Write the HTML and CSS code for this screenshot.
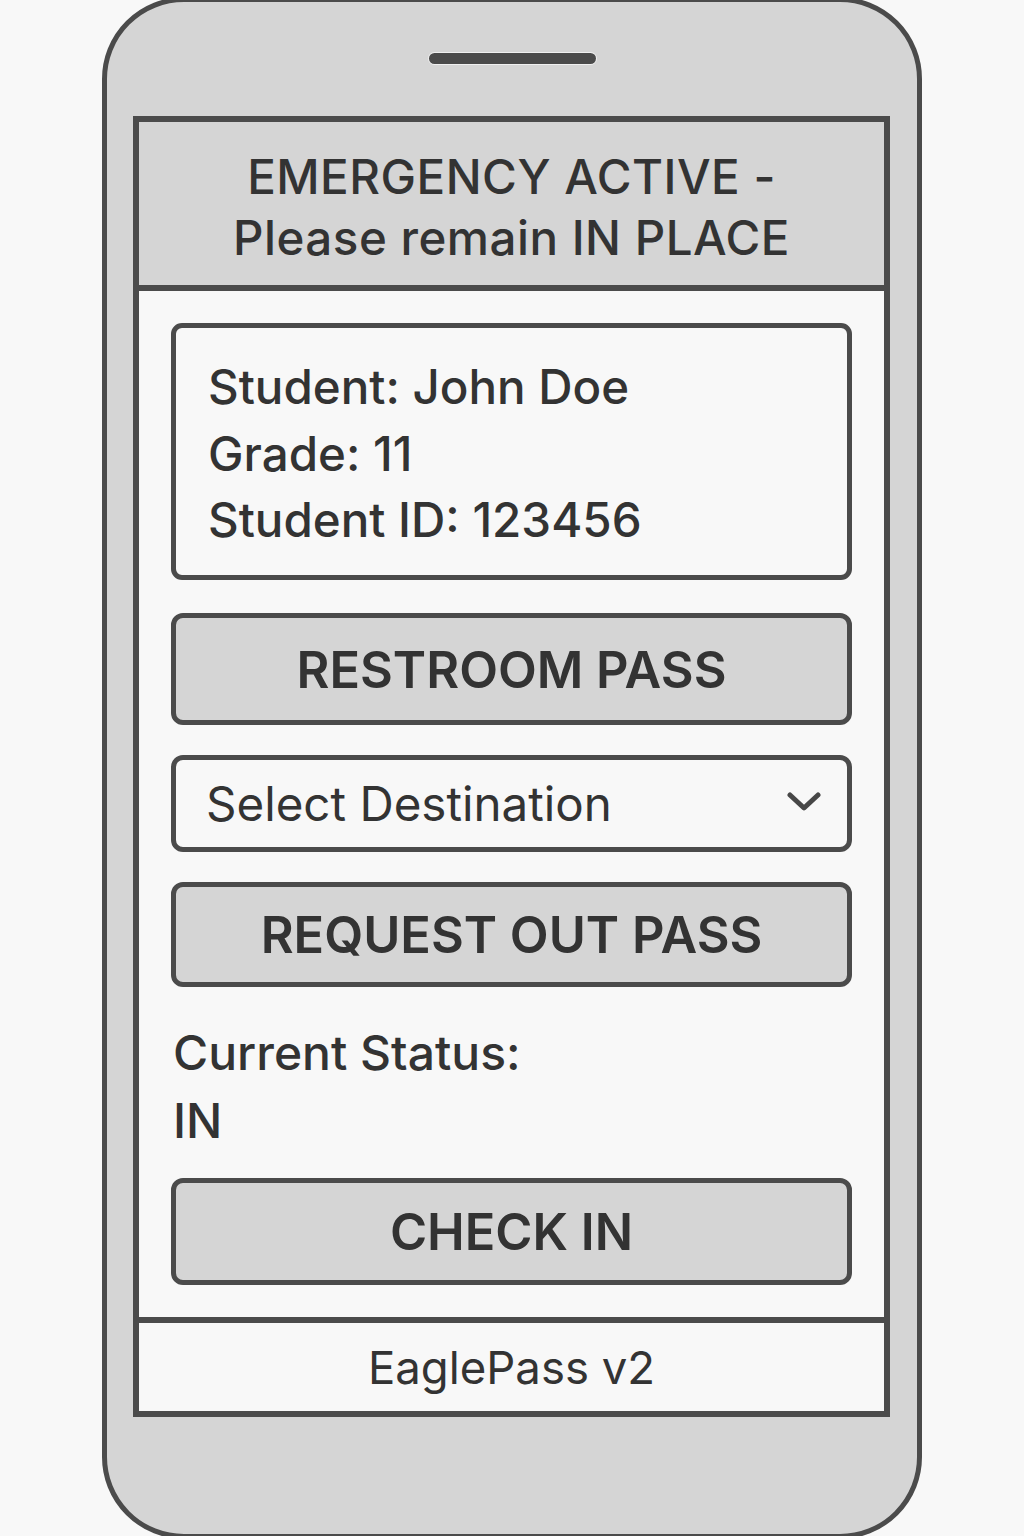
FILE: index.html
```html
<!DOCTYPE html>
<html lang="en">
<head>
<meta charset="utf-8">
<title>EaglePass v2</title>
<link rel="stylesheet" href="styles.css">
</head>
<body>
<div class="phone">
  <div class="speaker"></div>
  <div class="screen">
    <header class="alert">
      <div class="alert-line">EMERGENCY ACTIVE -</div>
      <div class="alert-line">Please remain IN PLACE</div>
    </header>
    <main class="content">
      <section class="card">
        <div class="card-line">Student: John Doe</div>
        <div class="card-line">Grade: 11</div>
        <div class="card-line">Student ID: 123456</div>
      </section>
      <button class="btn btn-restroom">RESTROOM PASS</button>
      <div class="select">
        <span class="select-label">Select Destination</span>
        <svg class="chevron" width="34" height="22" viewBox="0 0 34 22"><path d="M3 4 L17 17 L31 4" fill="none" stroke="#474747" stroke-width="5" stroke-linecap="round" stroke-linejoin="round"/></svg>
      </div>
      <button class="btn btn-request">REQUEST OUT PASS</button>
      <div class="status">
        <div class="status-line">Current Status:</div>
        <div class="status-line">IN</div>
      </div>
      <button class="btn btn-check">CHECK IN</button>
    </main>
    <footer class="footer">EaglePass v2</footer>
  </div>
</div>
</body>
</html>
```

FILE: styles.css
```css
html, body {
  margin: 0;
  padding: 0;
  background: #f8f8f8;
  font-family: "Inter", "Liberation Sans", sans-serif;
  color: #333333;
  overflow: hidden;
}

.phone {
  box-sizing: border-box;
  width: 820px;
  height: 1542px;
  margin: -3px 0 0 102px;
  border: 5px solid #4b4b4b;
  border-radius: 82px;
  background: #d5d5d5;
  display: flex;
  flex-direction: column;
}

.speaker {
  width: 167px;
  height: 11px;
  border-radius: 6px;
  background: #4b4b4b;
  margin: 51px auto 0;
  box-shadow: 0 0 0 1px #f0f0f0;
}

.screen {
  box-sizing: border-box;
  width: 757px;
  margin: 52px 0 0 26px;
  border: 6px solid #4b4b4b;
  display: flex;
  flex-direction: column;
}

.alert {
  box-sizing: border-box;
  height: 169px;
  background: #d5d5d5;
  border-bottom: 6px solid #4b4b4b;
  display: flex;
  flex-direction: column;
  justify-content: center;
  align-items: center;
  padding-top: 6px;
}

.alert-line {
  font-size: 47.5px;
  font-weight: 500;
  line-height: 61px;
  letter-spacing: 0.5px;
}

.content {
  box-sizing: border-box;
  height: 1026px;
  background: #f8f8f8;
  padding: 32px 32px 31px 32px;
  display: flex;
  flex-direction: column;
}

.card {
  box-sizing: border-box;
  height: 257px;
  border: 5px solid #4b4b4b;
  border-radius: 11px;
  padding: 26px 20px 0 32px;
}

.card-line {
  font-size: 47.5px;
  line-height: 66.5px;
  font-weight: 500;
}

.btn {
  box-sizing: border-box;
  display: flex;
  align-items: center;
  justify-content: center;
  width: 100%;
  border: 5px solid #4b4b4b;
  border-radius: 12px;
  background: #d5d5d5;
  color: #333333;
  font-family: "Inter", "Liberation Sans", sans-serif;
  font-weight: 600;
  font-size: 50.5px;
  padding: 0;
  margin: 0;
}

.btn-restroom {
  height: 112px;
  margin-top: 33px;
}

.select {
  box-sizing: border-box;
  height: 97px;
  margin-top: 30px;
  border: 5px solid #4b4b4b;
  border-radius: 12px;
  background: #f8f8f8;
  display: flex;
  align-items: center;
  justify-content: space-between;
  padding: 0 26px 0 30px;
}

.select-label {
  font-size: 47.5px;
  font-weight: 400;
}

.chevron {
  display: block;
  margin-top: -4px;
}

.btn-request {
  height: 105px;
  margin-top: 30px;
}

.status {
  margin-top: 32px;
  padding-left: 2px;
}

.status-line {
  font-size: 48px;
  font-weight: 500;
  line-height: 68px;
}

.btn-check {
  height: 107px;
  margin-top: 23px;
}

.footer {
  height: 88px;
  border-top: 6px solid #4b4b4b;
  background: #f8f8f8;
  display: flex;
  align-items: center;
  justify-content: center;
  font-size: 45.5px;
  font-weight: 400;
}
```
